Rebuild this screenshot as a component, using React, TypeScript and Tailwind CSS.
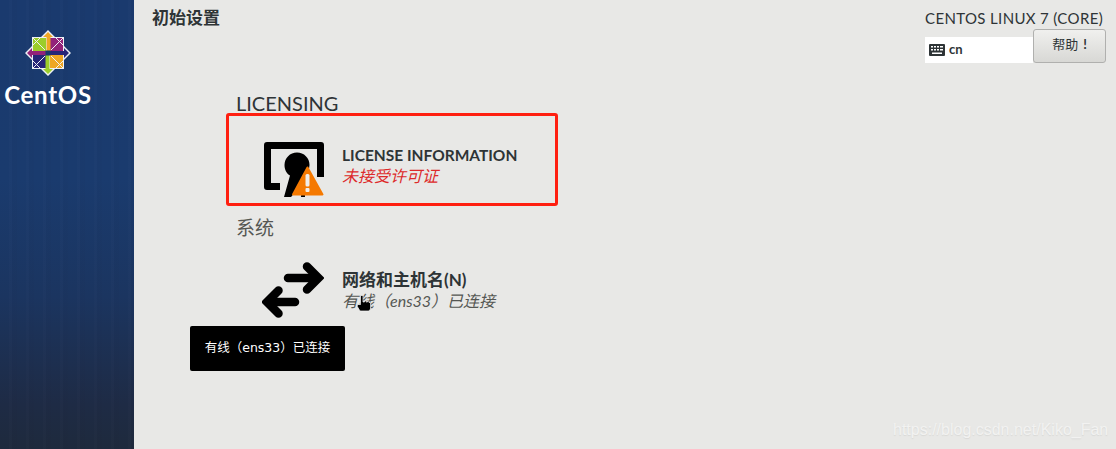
const cjk = "font-['Lato','Noto_Sans_CJK_SC',sans-serif]";

function Logo() {
  return (
    <svg width="48" height="48" viewBox="0 0 48 48" className="block">
      <path d="M24 1 L31 8 H40 V17 L47 24 L40 31 V40 H31 L24 47 L17 40 H8 V31 L1 24 L8 17 V8 H17 Z" fill="#eef1f5" />
      <path d="M9 9 H22 V22 H9 Z" fill="#9ccd2a" />
      <path d="M26 9 H39 V22 H26 Z" fill="#932279" />
      <path d="M26 26 H39 V39 H26 Z" fill="#efa724" />
      <path d="M9 26 H22 V39 H9 Z" fill="#262577" />
      <path d="M24 3 L29 8 H26.500 V22 H22.500 V8 H19 Z" fill="#efa724" />
      <path d="M45 24 L40 29 V26 H26 V22 H40 V19 Z" fill="#262577" />
      <path d="M24 45 L19 40 H21.500 V26 H25.500 V40 H29 Z" fill="#9ccd2a" />
      <path d="M3 24 L8 19 V22 H22 V26 H8 V29 Z" fill="#932279" />
      <g stroke="#eef1f5" strokeWidth="1" fill="none">
        <path d="M9 9 L21 21 M39 9 L27 21 M39 39 L27 27 M9 39 L21 27" />
        <path d="M16 9 L9 16 M32 9 L39 16 M16 39 L9 32 M32 39 L39 32" />
      </g>
      <rect x="21.500" y="21.500" width="5" height="5" fill="#1a3a6e" />
    </svg>
  );
}

function LicenseIcon() {
  return (
    <svg width="62" height="58" viewBox="0 0 62 58" className="block">
      <path d="M3 1 H57 Q60 1 60 4 V36 H53 V8 H7 V42 H16 V49 H3 Q0 49 0 46 V4 Q0 1 3 1 Z" fill="#000" />
      <path d="M33 11.500 C26 11.500 20.500 17 20.500 24 C20.500 28.500 22.500 32.500 26 34.500 L20 56 L27 56 L38 44 L37 56 L41 56 L40 34 C43.500 32 45.500 28.500 45.500 24 C45.500 17 40 11.500 33 11.500 Z" fill="#000" />
      <path d="M43.500 26.500 L58.500 53.500 H29 Z" fill="#f57900" stroke="#f57900" strokeWidth="2" strokeLinejoin="round" />
      <rect x="41.500" y="33" width="4" height="12.500" rx="1.500" fill="#f0eeea" />
      <rect x="41.500" y="47" width="4" height="4" rx="1" fill="#f0eeea" />
    </svg>
  );
}

function NetworkIcon() {
  return (
    <svg width="62" height="58" viewBox="0 0 62 58" className="block">
      <g fill="none" stroke="#000" strokeWidth="8.500" strokeLinecap="round" strokeLinejoin="miter">
        <path d="M26 16 H54" />
        <path d="M45 4.500 L56.500 16 L45 27.500" />
        <path d="M33 40 H7" />
        <path d="M16.500 28.500 L5 40 L16.500 51.500" />
      </g>
    </svg>
  );
}

function Cursor() {
  return (
    <svg width="16" height="17" viewBox="0 0 16 17" className="block">
      <path d="M4.500 0.500 H7 V7 H8.500 V5.500 H10 V7 H11.500 V6 H13 V7.500 H14.500 V14 L13 16 H4 L1 11 L2 9.500 H4.500 Z" fill="#000" stroke="#f4f4f4" strokeWidth="0.7" />
    </svg>
  );
}

function KeyboardIcon() {
  return (
    <svg width="16" height="12" viewBox="0 0 16 12" className="block">
      <rect width="16" height="12" rx="1" fill="#2e3436" />
      <g fill="#fff">
        <rect x="2" y="2" width="2" height="1.500" /><rect x="5" y="2" width="2" height="1.500" /><rect x="8" y="2" width="2" height="1.500" /><rect x="11" y="2" width="3" height="1.500" />
        <rect x="2" y="5" width="2" height="1.500" /><rect x="5" y="5" width="2" height="1.500" /><rect x="8" y="5" width="2" height="1.500" /><rect x="11" y="5" width="3" height="1.500" />
        <rect x="3" y="8.500" width="10" height="1.500" />
      </g>
    </svg>
  );
}

export default function App() {
  const stripes = "repeating-linear-gradient(90deg, rgba(255,255,255,0) 0 9px, rgba(255,255,255,0.012) 9px 12px, rgba(0,0,0,0.015) 12px 17px)";
  return (
    <div className={`relative flex h-[449px] w-[1116px] overflow-hidden bg-[#e8e8e6] ${cjk}`}>
      <aside className="relative flex w-[134px] shrink-0 flex-col items-center bg-[linear-gradient(180deg,#1a3a6e_0%,#1a3b6e_40%,#1b3560_66%,#1e2b45_90%,#1e2a3d_100%)] pt-[29px]">
        <div className="absolute inset-0" style={{ backgroundImage: stripes }} />
        <div className="relative -ml-[38px]"><Logo /></div>
        <div className="relative -ml-[38px] mt-[3px] text-[24px] font-bold leading-[30px] tracking-[0.7px] text-white font-['Lato',sans-serif]">CentOS</div>
      </aside>

      <main className="flex min-w-0 flex-1 flex-col">
        <div className="flex h-[63px] justify-between pl-[18px] pr-[10px]">
          <h1 className="pt-[8px] text-[17px] font-bold leading-[20px] text-[#2e3436]">初始设置</h1>
          <div className="flex flex-col pt-[9px]">
            <div className="pr-[3px] text-right text-[15px] leading-[18px] tracking-[0.35px] text-[#2e3436]">CENTOS LINUX 7 (CORE)</div>
            <div className="mt-[2px] flex items-end">
              <div className="flex h-[26px] w-[108px] items-center gap-[4px] bg-white pl-[4px] text-[13px] font-bold text-[#2e3436]">
                <KeyboardIcon />
                <span>cn</span>
              </div>
              <button className="flex h-[34px] w-[73px] items-center justify-center gap-[5px] rounded-[3px] border border-[#b0b0ae] bg-[linear-gradient(180deg,#f0f0ee,#d8d8d5)] pb-[3px] text-[13px] text-[#2e3436]"><span>帮助</span><span className="font-bold">!</span></button>
            </div>
          </div>
        </div>

        <section className="mt-[28px] ml-[102px] flex flex-col">
          <h2 className="text-[20px] leading-[24px] text-[#2e3436]">LICENSING</h2>
          <div className="mt-[26px] flex h-[58px] items-center">
            <div className="ml-[28px] w-[78px]"><LicenseIcon /></div>
            <div className="-mt-[10px] flex flex-col">
              <span className="text-[15.500px] font-bold leading-[22px] text-[#2e3436]">LICENSE INFORMATION</span>
              <span className="text-[16px] italic leading-[20px] text-[#dd2a2a]">未接受许可证</span>
            </div>
          </div>
          <h2 className="mt-[17px] text-[19px] leading-[24px] text-[#555753]">系统</h2>
          <div className="mt-[22px] flex h-[58px] items-center">
            <div className="ml-[26px] w-[80px]"><NetworkIcon /></div>
            <div className="-mt-[2px] flex flex-col">
              <span className="text-[17px] font-bold leading-[22px] text-[#2e3436]">网络和主机名(N)</span>
              <span className="text-[16px] italic leading-[20px] text-[#555753]">有线（ens33）已连接</span>
            </div>
          </div>
        </section>
      </main>

      {/* annotation, tooltip and pointer lying over the page */}
      <div className="absolute left-[226px] top-[113px] h-[93px] w-[332px] rounded-[3px] border-[3px] border-[#ff1f10]" />
      <div className="absolute left-[190px] top-[326px] flex h-[45px] w-[155px] items-center justify-center rounded-[2px] bg-black text-[12.500px] text-white font-['DejaVu_Sans','Noto_Sans_CJK_SC',sans-serif]">有线（ens33）已连接</div>
      <div className="absolute left-[356px] top-[295px]"><Cursor /></div>
      <div className="absolute left-[893px] top-[419px] text-[16px] leading-[22px] text-[#f2f2f1] font-['Liberation_Sans',sans-serif] [text-shadow:0_1px_1px_#d8d8d6]">https://blog.csdn.net/Kiko_Fan</div>
    </div>
  );
}
